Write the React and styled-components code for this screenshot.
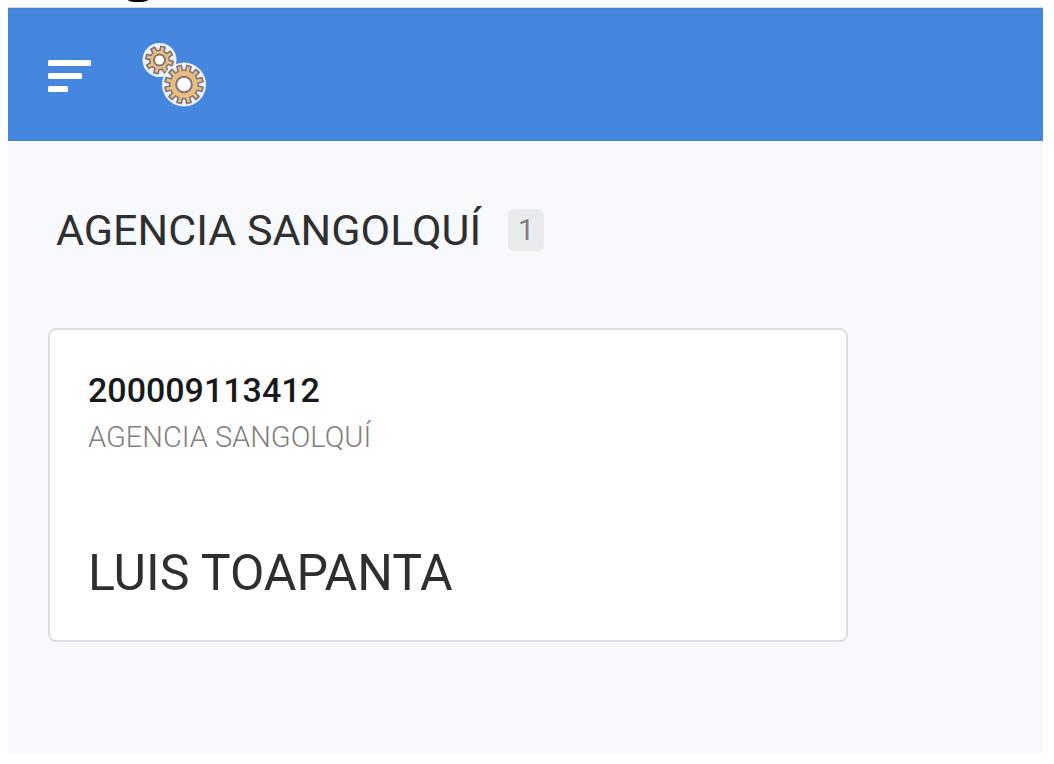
import styled, { createGlobalStyle } from 'styled-components'

const GlobalStyle = createGlobalStyle`
  * {
    box-sizing: border-box;
  }
  body {
    margin: 0;
    background: #fff;
    color: #2e2f30;
    font-family: Roboto, "Liberation Sans", sans-serif;
  }
`;

const Page = styled.div`
  display: flex;
  flex-direction: column;
  min-height: 100vh;
  padding: 0 11px 11px 8px;
`;

const TopEdge = styled.div`
  height: 8px;
  padding-left: 120px;
  border-bottom: 1px solid #cfdae6;
`;

const Mark = styled.div`
  width: 20px;
  height: 2px;
  background: #000;
  border-radius: 0 0 10px 10px / 0 0 2px 2px;
`;

const Header = styled.header`
  display: flex;
  align-items: center;
  gap: 48px;
  height: 133px;
  padding: 0 40px;
  background: #4587de;
  border-top: 1px solid #4a80c4;
  border-bottom: 1px solid #4a80c4;
`;

const MenuButton = styled.button`
  display: flex;
  padding: 0;
  border: 0;
  background: none;
  cursor: pointer;
`;

const HomeLink = styled.a`
  display: flex;
`;

const Main = styled.main`
  flex: 1;
  padding: 63px 40px 40px;
  background: #f7f9fc;
`;

const TitleRow = styled.div`
  display: flex;
  align-items: center;
  gap: 27px;
  padding-left: 8px;
  margin-bottom: 72px;
`;

const Title = styled.h1`
  margin: 0;
  font-size: 43px;
  font-weight: 400;
  line-height: 52px;
`;

const Badge = styled.span`
  padding: 0 10px;
  border-radius: 6px;
  background: #e9eaec;
  color: #7c7d7f;
  font-size: 29px;
  line-height: 42px;
`;

const Card = styled.article`
  max-width: 800px;
  padding: 37px 38px 39px;
  background: #fff;
  border: 2px solid #dcdddf;
  border-radius: 8px;
`;

const Code = styled.h2`
  margin: 0;
  color: #18191c;
  font-size: 34px;
  font-weight: 500;
  line-height: 46px;
`;

const Branch = styled.p`
  margin: 0 0 84px;
  color: #808080;
  font-size: 29px;
  font-weight: 300;
  line-height: 48px;
`;

const Client = styled.p`
  margin: 0;
  font-size: 50px;
  line-height: 56px;
`;

function MenuIcon() {
  return (
    <svg width="44" height="34" viewBox="0 0 44 34" fill="#fff" aria-hidden="true">
      <rect x="0" y="2" width="43" height="6" rx="1.5" />
      <rect x="0" y="15" width="34" height="6" rx="1.5" />
      <rect x="0" y="28" width="20" height="6" rx="1.5" />
    </svg>
  )
}

function Gear({ cx, cy, halo, outer, body, hole, teeth }) {
  const angles = Array.from({ length: teeth }, (_, i) => (i * 360) / teeth + 15);
  return (
    <g transform={`translate(${cx} ${cy})`}>
      <circle r={halo} fill="#eef3fc" />
      {angles.map((a) => (
        <rect key={a} x="-3" y={-outer} width="6" height="7" rx="1" fill="#82747a" transform={`rotate(${a})`} />
      ))}
      <circle r={body + 1.5} fill="#82747a" />
      <circle r={body} fill="#e8bf80" />
      {angles.map((a) => (
        <rect key={a} x="-1.4" y={1.8 - outer} width="2.8" height="5" fill="#e8bf80" transform={`rotate(${a})`} />
      ))}
      <circle r={hole + 2} fill="#82747a" />
      <circle r={hole} fill="#fff" />
    </g>
  )
}

function GearsLogo() {
  return (
    <svg width="66" height="66" viewBox="0 0 66 66" aria-hidden="true">
      <Gear cx={19.5} cy={18} halo={17} outer={14.5} body={9} hole={4.5} teeth={8} />
      <Gear cx={44} cy={42.5} halo={22} outer={20} body={13.5} hole={6.8} teeth={12} />
    </svg>
  )
}

export default function App() {
  return (
    <>
      <GlobalStyle />
      <Page>
        <TopEdge>
          <Mark />
        </TopEdge>
        <Header>
          <MenuButton type="button" aria-label="Menú">
            <MenuIcon />
          </MenuButton>
          <HomeLink href="#" aria-label="Inicio">
            <GearsLogo />
          </HomeLink>
        </Header>
        <Main>
          <TitleRow>
            <Title>AGENCIA SANGOLQUÍ</Title>
            <Badge>1</Badge>
          </TitleRow>
          <Card>
            <Code>200009113412</Code>
            <Branch>AGENCIA SANGOLQUÍ</Branch>
            <Client>LUIS TOAPANTA</Client>
          </Card>
        </Main>
      </Page>
    </>
  )
}
